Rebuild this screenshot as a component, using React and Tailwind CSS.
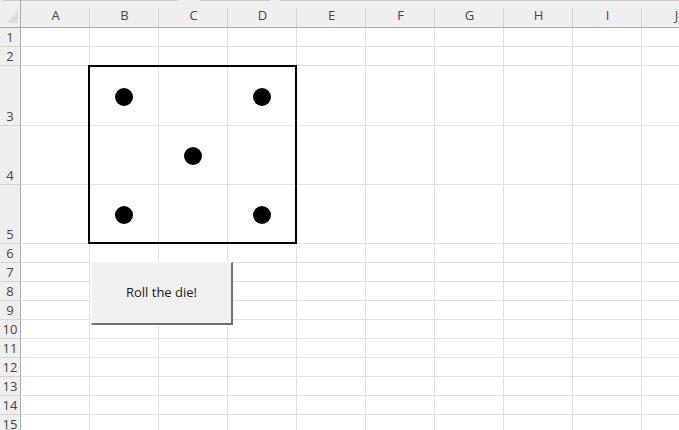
import React from "react";

const COLS = ["A", "B", "C", "D", "E", "F", "G", "H", "I", "J"];
const ROWS = [
  { n: 1, h: "h-[19px]" },
  { n: 2, h: "h-[19px]" },
  { n: 3, h: "h-[60px]" },
  { n: 4, h: "h-[59px]" },
  { n: 5, h: "h-[59px]" },
  { n: 6, h: "h-[19px]" },
  { n: 7, h: "h-[19px]" },
  { n: 8, h: "h-[19px]" },
  { n: 9, h: "h-[19px]" },
  { n: 10, h: "h-[19px]" },
  { n: 11, h: "h-[19px]" },
  { n: 12, h: "h-[19px]" },
  { n: 13, h: "h-[19px]" },
  { n: 14, h: "h-[19px]" },
  { n: 15, h: "h-[19px]" },
];

const DOTS = [
  "left-[25px] top-[21px]",
  "left-[163px] top-[21px]",
  "left-[94px] top-[80px]",
  "left-[25px] top-[139px]",
  "left-[163px] top-[139px]",
];

export default function App() {
  return (
    <div className="relative w-[679px] h-[430px] overflow-hidden bg-white font-['Open_Sans','Noto_Sans',sans-serif] text-[#444]">
      {/* header */}
      <div className="flex h-[28px] bg-[#efefef] border-b border-[#ababab] relative">
        <div className="absolute left-0 top-0 right-0 h-px flex">
          <div className="w-[3px] bg-[#efefef]" />
          <div className="w-[175px] bg-[#c9c9c9]" />
          <div className="w-[22px] bg-[#efefef]" />
          <div className="w-[70px] bg-[#c9c9c9]" />
          <div className="w-[10px] bg-[#efefef]" />
          <div className="flex-1 bg-[#c9c9c9]" />
        </div>
        <div className="relative w-[21px] shrink-0 border-r border-[#ababab]">
          <svg className="absolute left-[7px] top-[10px]" width="11" height="13" viewBox="0 0 11 13">
            <polygon points="11,0 11,13 0,13" fill="#dcdcdc" />
          </svg>
        </div>
        {COLS.map((c) => (
          <div key={c} className="relative w-[69px] shrink-0 flex items-center justify-center pt-[4px] text-[13px] leading-none">
            {c}
            <span className="absolute right-0 top-[8px] bottom-0 w-px bg-[#d4d4d4]" />
          </div>
        ))}
      </div>

      {/* rows */}
      {ROWS.map((r) => (
        <div key={r.n} className={`flex ${r.h}`}>
          <div className="w-[21px] shrink-0 bg-[#efefef] border-r border-b border-r-[#ababab] border-b-[#d4d4d4] flex items-end justify-center pb-[1px] text-[13px] leading-[16px]">
            {r.n}
          </div>
          {COLS.map((c) => (
            <div key={c} className="w-[69px] shrink-0 border-r border-b border-[#e1e1e1]" />
          ))}
        </div>
      ))}

      {/* die */}
      <div className="absolute left-[88px] top-[65px] w-[209px] h-[179px] border-2 border-black">
        {DOTS.map((p, i) => (
          <div key={i} className={`absolute ${p} w-[18px] h-[18px] rounded-full bg-black`} />
        ))}
      </div>

      {/* button */}
      <div className="absolute left-[91px] top-[262px] w-[142px] h-[63px] bg-[#f0f0f0] border-t border-l border-t-[#f8f8f8] border-l-[#f8f8f8] border-r-2 border-b-2 border-r-[#707070] border-b-[#707070] flex items-center justify-center">
        <span className="text-[13px] text-[#1a1a1a] font-['Open_Sans','Noto_Sans',sans-serif]">Roll the die!</span>
      </div>
    </div>
  );
}
